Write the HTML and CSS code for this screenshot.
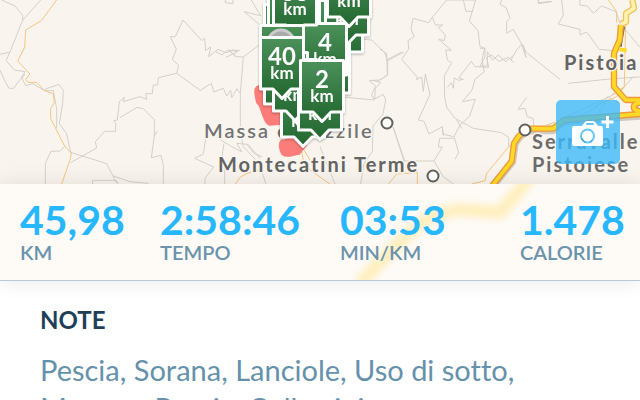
FILE: index.html
```html
<!DOCTYPE html>
<html lang="it">
<head>
<meta charset="utf-8">
<meta name="viewport" content="width=device-width, initial-scale=1">
<title>Allenamento</title>
<link rel="stylesheet" href="styles.css">
</head>
<body>
<main class="workout">
  <section class="map" aria-label="Mappa">
    <svg class="map-canvas" viewBox="0 0 640 184" preserveAspectRatio="xMidYMin slice">
      <defs>
        <linearGradient id="green" x1="0" y1="0" x2="0" y2="1">
          <stop offset="0" stop-color="#4b9159"/>
          <stop offset="1" stop-color="#22662f"/>
        </linearGradient>
        <path id="pin" d="M1.5 1.5h43v51.5h-12.5l-9 9.500-9-9.500h-12.500z"/>
      </defs>

      <!-- Roads are drawn on a grid three times finer than the map -->
      <g transform="scale(.33333)">
        <g class="minor">
          <path d="M5 0L45 18 68 46V61L30 156 18 182 43 210 75 215 62 236 41 265H27L14 242 0 210M122 0L68 61M0 163L28 157M75 222L66 235 77 257 98 251 134 272H160L165 300 170 326V384M134 268L176 253 190 271 188 310 178 370 200 402 212 457 320 491 350 549M212 488L290 444 286 425 314 394H347V370L341 362 352 360 358 305 373 292 370 305 420 290 440 298 437 281H457L460 255H473L475 233 530 220 601 271 634 250 642 276 670 265 680 288 692 270 695 293 711 266 719 279M360 353L411 322 430 326 463 359V408L472 393M463 408L454 473 483 466 490 494V552M136 552V490L153 454 181 453 196 437M278 552V541H349L354 552M340 528L390 545 445 550M530 220L536 196 517 178 529 148 511 110H526L549 60 606 122 614 114 617 152 632 141 626 170 654 148 678 158 698 150 720 152M676 0V8L699 11V0M618 410L610 462 584 475 641 501 615 535V552"/>
          <g transform="translate(540)">
            <path d="M108 155L126 165 143 150 170 170 190 171 240 133M190 171L181 280V400L190 440 237 490 258 552M192 35L242 47 214 0M192 35L240 75M138 172L173 155 148 150 168 172M110 412L155 440 186 456 170 430 204 433 240 475M132 430L125 475 134 500V552M200 432L222 460 246 470"/>
          </g>
          <g transform="translate(960)">
            <path d="M130 118L155 120 194 158 203 185V225L180 240 148 242 167 258 155 284 163 300 75 292M155 240L182 247 166 265 164 297 190 283 197 300 189 342 159 378 157 455M203 182L252 156M218 378L255 485M157 455L132 490 122 552M0 440L45 552"/>
          </g>
          <g transform="translate(1140)">
            <path d="M200 0H287L268 63 294 92 300 140 314 144 306 180 313 215 285 238 276 270 247 305 286 298 268 350 240 375 222 410 236 458 225 478M250 0L258 34H278M200 0L157 52 146 68 99 55 93 88 103 110 84 122 86 147 65 178 115 235 108 238 125 232 130 274 136 222 150 283 115 360 132 364 147 402 187 380 189 402 220 410M157 52L166 75H188L175 83 196 105 193 122 176 118 214 151 197 150 202 180 216 190 208 200 193 228 194 290 200 322 225 355 280 385 365 398 386 412V440M202 262L214 248 220 265 223 234 236 241 250 238 236 234 274 184 285 200 326 202 320 172 335 165 356 184 385 172 402 188M393 180L410 150 424 133 438 172 430 135M365 0L360 13 378 22 390 55 380 65V100L400 88 440 158 540 238M20 180L65 156M0 148L20 160 22 225 0 240M41 385L72 483H162L187 441H175L179 415H220M162 483L190 530 220 552M190 408L187 380M230 360L245 385M440 292L414 328 435 325 442 350 459 355 462 380M475 0V11L516 5"/>
          </g>
          <g transform="translate(1440)">
            <path d="M175 0V8L215 4M245 0L250 45 235 72 300 88V105L320 96 358 148 400 152M300 0L299 15 322 18 340 40 365 18 408 35 420 70 480 142M265 250L400 236 480 231M260 350L345 310 420 275 460 230M350 345L370 320 382 290 420 310M0 145H15V170L0 198H22V155L38 180 55 165 77 185 98 168"/>
          </g>
        </g>

        <g class="local">
          <path d="M170 0L124 62 77 90 74 142 53 183 90 222 77 238 84 247H110L133 271 160 282 163 308 152 326V355L168 387 193 437 214 460 210 480 185 552M706 552L722 530 755 515 776 510M900 430L912 490 930 510 990 552M912 450L945 505M1165 552L1190 522 1252 518V552M1415 552L1455 542 1460 520 1530 436M1640 376L1665 366"/>
          <path d="M1825 0L1850 35V68M1877 60L1873 260 1850 290 1800 310 1760 340 1650 380M1873 260L1835 285"/>
        </g>

        <path class="rail" d="M1872 80L1862 140"/>
        <g class="highway-shadow"><path d="M1483 556L1539 487 1547 432 1560 413 1582 394H1660L1692 366 1920 350"/></g>
        <g class="highway-edge"><path id="a11" d="M1476 558L1535 484 1542 430 1555 410 1580 386H1660L1692 360 1920 342M1863 75L1859 120 1842 160V260L1877 300H1920M1920 308C1895 312 1895 330 1920 334"/></g>
        <g class="highway"><use href="#a11"/></g>
        <path class="road-edge" d="M1863 72L1878 66V40L1902 25 1897 0"/>
        <path class="road" d="M1863 72L1878 66V40L1902 25 1897 0"/>
        <path class="highway" d="M1858 148L1880 151"/>

        <path class="route" d="M780 254C755 258 763 285 769 310 784 320 786 370 808 377L850 374 860 415C835 410 830 440 845 465 860 477 880 466 899 464L922 435 880 350 800 270Z"/>
      </g>

      <g class="label">
        <text x="204" y="138">Massa e Cozzile</text>
        <text x="564" y="70" class="city">Pistoia</text>
        <text x="218" y="172" class="city">Montecatini Terme</text>
        <text x="532" y="149" class="town">Serravalle</text>
        <text x="532" y="172" class="town">Pistoiese</text>
      </g>
      <g class="place">
        <circle cx="387" cy="123" r="5.500"/>
        <circle cx="433" cy="176" r="5.500"/>
        <circle cx="525" cy="130" r="5.500"/>
      </g>

      <g class="pins">
        <use href="#pin" x="263" y="3"/>
        <use href="#pin" x="267" y="-8"/>
        <use href="#pin" x="318" y="-1"/>
        <use href="#pin" x="305" y="40"/>
        <g transform="translate(324 -18)"><use href="#pin"/><text class="unit" x="23" y="43">km</text></g>
        <g transform="translate(302 22)"><use href="#pin"/><text x="23" y="29">4</text><text class="unit" x="23" y="43">km</text></g>
        <g transform="translate(326 -36)"><use href="#pin"/><text class="unit" x="23" y="43">km</text></g>
        <g transform="translate(272 -28)"><use href="#pin"/><text x="23" y="29">38</text><text class="unit" x="23" y="43">km</text></g>
        <use href="#pin" x="263" y="51"/>
        <use href="#pin" x="259" y="24"/>
        <circle class="finish" cx="281" cy="43" r="13"/>
        <g transform="translate(280 84)"><use href="#pin"/><text class="unit" x="23" y="43">km</text></g>
        <g transform="translate(272 58)"><use href="#pin"/><text class="unit" x="23" y="43">km</text></g>
        <g transform="translate(297 77)"><use href="#pin"/><text class="unit" x="23" y="43">km</text></g>
        <g transform="translate(259 36)"><use href="#pin"/><text x="23" y="29">40</text><text class="unit" x="23" y="43">km</text></g>
        <g transform="translate(299 59)"><use href="#pin"/><text x="23" y="29">2</text><text class="unit" x="23" y="43">km</text></g>
      </g>
    </svg>
    <button class="add-photo" type="button" aria-label="Aggiungi foto">
      <svg viewBox="0 0 64 64">
        <path fill="#fff" fill-rule="evenodd" d="M18 26h8l3-4q1-1 2-1h6q1 0 2 1l3 4h3q2 0 2 2v16q0 2-2 2H18q-2 0-2-2V28q0-2 2-2zM31 23q-1 0-1 1t1 1h6q1 0 1-1t-1-1zM31.500 28.500a7.500 7.500 0 1 0 0 15a7.500 7.500 0 1 0 0-15z"/>
        <circle cx="31.500" cy="36" r="5.500" fill="#fff"/>
        <path stroke="#fff" stroke-width="3" d="M51.500 16v12M45.500 22h12"/>
      </svg>
    </button>
  </section>

  <section class="stats">
    <svg class="stats-backdrop" viewBox="0 0 640 97" preserveAspectRatio="xMidYMid slice" aria-hidden="true">
      <path d="M530 -6L500 29 458 26 430 33 400 58 360 100"/>
    </svg>
    <dl class="stats-list">
      <div class="stat"><dt>KM</dt><dd>45,98</dd></div>
      <div class="stat"><dt>TEMPO</dt><dd>2:58:46</dd></div>
      <div class="stat"><dt>MIN/KM</dt><dd>03:53</dd></div>
      <div class="stat"><dt>CALORIE</dt><dd>1.478</dd></div>
    </dl>
  </section>

  <section class="notes">
    <h2>NOTE</h2>
    <p>Pescia, Sorana, Lanciole, Uso di sotto,<br>Macena, Pescia, Colle vini</p>
  </section>
</main>
</body>
</html>
```
FILE: styles.css
```css
* {
  box-sizing: border-box;
}

body {
  margin: 0;
  background: #fff;
  font-family: Lato, "Liberation Sans", sans-serif;
}

.workout {
  height: 100vh;
  overflow: hidden;
}

/* Map */
.map {
  position: relative;
  background: #f9f5ee;
}

.map-canvas {
  display: block;
  width: 100%;
  min-height: 184px;
  overflow: hidden;
}

.map-canvas path {
  stroke-linejoin: round;
}

.minor,
.local,
.rail,
.highway-shadow,
.highway-edge,
.highway,
.road-edge,
.road {
  fill: none;
}

.minor {
  stroke: #d3d0c9;
  stroke-width: 3;
}

.local {
  stroke: #f4c481;
  stroke-width: 3;
}

.rail {
  stroke: #555;
  stroke-width: 6;
}

.highway-shadow {
  stroke: #cfcac2;
  stroke-width: 18;
}

.highway-edge {
  stroke: #ec9a3c;
  stroke-width: 19;
}

.highway {
  stroke: #ffd926;
  stroke-width: 11;
}

.road-edge {
  stroke: #eec25c;
  stroke-width: 19;
}

.road {
  stroke: #fff2ae;
  stroke-width: 11;
}

.route {
  fill: #fb7c78;
}

.label {
  fill: #737373;
  stroke: #f9f5ee;
  stroke-width: 3;
  paint-order: stroke;
  font-size: 20px;
  font-weight: 600;
  letter-spacing: 2px;
}

.label .city {
  fill: #646464;
  font-weight: 700;
}

.label .town {
  fill: #6c6c6c;
  font-weight: 700;
}

.place {
  fill: #fff;
  stroke: #62605a;
  stroke-width: 2;
}

.pins {
  fill: url(#green);
  stroke: #fff;
  stroke-width: 3;
  filter: drop-shadow(0 1px 1px rgba(0, 0, 0, .3));
}

.pins text {
  fill: #fff;
  stroke: none;
  font-size: 24px;
  font-weight: 700;
  text-anchor: middle;
}

.pins .unit {
  font-size: 17px;
}

.pins .finish {
  fill: #aaa;
  stroke: #ccc;
}

.add-photo {
  position: absolute;
  right: 20px;
  bottom: 20px;
  width: 64px;
  height: 64px;
  padding: 0;
  border: 0;
  border-radius: 5px;
  background: rgba(58, 184, 250, .78);
}

.add-photo svg {
  display: block;
}

/* Stats */
.stats {
  position: relative;
  background: #fefaf5;
  border-bottom: 1px solid #b9c9d6;
  box-shadow: 0 0 20px rgba(0, 0, 0, .1);
}

.stats-backdrop {
  position: absolute;
  inset: 0;
  width: 100%;
  height: 100%;
}

.stats-backdrop path {
  fill: none;
  stroke: #ffefc0;
  stroke-width: 13;
  filter: blur(3px);
}

.stats-list {
  position: relative;
  display: grid;
  grid-template-columns: 7fr 9fr 9fr 6fr;
  margin: 0;
  padding: 16px 0 16px 20px;
}

.stat {
  display: flex;
  flex-direction: column-reverse;
}

.stat dt {
  color: #6a93ad;
  font-size: 20px;
  font-weight: 600;
  line-height: 24px;
}

.stat dd {
  margin: 0;
  color: #27b7ff;
  font-size: 41px;
  font-weight: 700;
  line-height: 40px;
}

/* Notes */
.notes {
  padding: 24px 40px;
}

.notes h2 {
  margin: 0 0 16px;
  color: #1f3f59;
  font-size: 24px;
  font-weight: 700;
  line-height: 30px;
}

.notes p {
  margin: 0;
  color: #6691ab;
  font-size: 29px;
  line-height: 38px;
  font-variant-ligatures: none;
}
```
